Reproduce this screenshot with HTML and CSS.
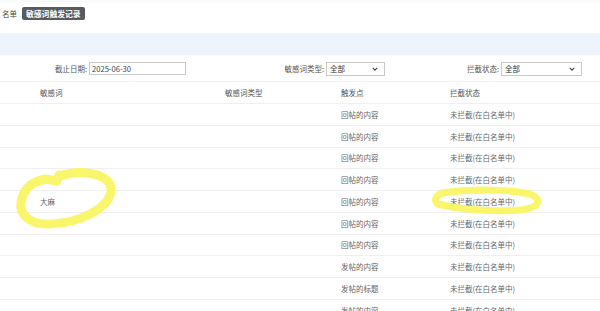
FILE: index.html
```html
<!DOCTYPE html>
<html lang="zh-CN">
<head>
<meta charset="utf-8">
<link rel="stylesheet" href="styles.css">
</head>
<body>
<div class="page">
  <div class="topbar">
    <span class="crumb">名单</span>
    <span class="badge">敏感词触发记录</span>
  </div>
  <div class="band"></div>
  <div class="filters">
    <label class="lbl lbl-date">截止日期:</label>
    <input class="inp" type="text" value="2025-06-30">
    <label class="lbl lbl-type">敏感词类型:</label>
    <div class="sel sel-type"><span>全部</span><svg viewBox="0 0 8 5" class="caret"><path d="M1 1 L4 4 L7 1" fill="none" stroke="#444" stroke-width="1.5"/></svg></div>
    <label class="lbl lbl-status">拦截状态:</label>
    <div class="sel sel-status"><span>全部</span><svg viewBox="0 0 8 5" class="caret"><path d="M1 1 L4 4 L7 1" fill="none" stroke="#444" stroke-width="1.5"/></svg></div>
  </div>
  <div class="table">
    <div class="row head"><div>敏感词</div><div>敏感词类型</div><div>触发点</div><div>拦截状态</div></div>
    <div class="row"><div></div><div></div><div>回帖的内容</div><div>未拦截(在白名单中)</div></div>
    <div class="row"><div></div><div></div><div>回帖的内容</div><div>未拦截(在白名单中)</div></div>
    <div class="row"><div></div><div></div><div>回帖的内容</div><div>未拦截(在白名单中)</div></div>
    <div class="row"><div></div><div></div><div>回帖的内容</div><div>未拦截(在白名单中)</div></div>
    <div class="row"><div>大麻</div><div></div><div>回帖的内容</div><div>未拦截(在白名单中)</div></div>
    <div class="row"><div></div><div></div><div>回帖的内容</div><div>未拦截(在白名单中)</div></div>
    <div class="row"><div></div><div></div><div>回帖的内容</div><div>未拦截(在白名单中)</div></div>
    <div class="row"><div></div><div></div><div>发帖的内容</div><div>未拦截(在白名单中)</div></div>
    <div class="row"><div></div><div></div><div>发帖的标题</div><div>未拦截(在白名单中)</div></div>
    <div class="row"><div></div><div></div><div>发帖的内容</div><div>未拦截(在白名单中)</div></div>
  </div>
  <svg class="marks" viewBox="0 0 600 311" width="600" height="311">
    <path d="M60 176 C84 168 112 175 111 190 C110 208 80 223 50 224 C29 225 19 214 21 202 C23 190 31 182 45 179 L57 181 L59 175" fill="none" stroke="#f8f55c" stroke-opacity="0.9" stroke-width="9" stroke-linecap="round" stroke-linejoin="round"/>
    <path d="M442 193 C470 189 508 189 530 194 C543 199 540 208 520 210 C494 212 462 210 438 204 C433 200 436 196 442 193" fill="none" stroke="#f8f55c" stroke-opacity="0.9" stroke-width="7" stroke-linecap="round" stroke-linejoin="round"/>
  </svg>
</div>
</body>
</html>
```
FILE: styles.css
```css
* { box-sizing: border-box; }
html, body { margin: 0; padding: 0; background: #fff; }
body {
  font-family: "Noto Sans CJK SC", "Microsoft YaHei", sans-serif;
  font-size: 7.5px;
  color: #555;
}
.page { position: relative; width: 600px; height: 311px; overflow: hidden; }
.topbar {
  height: 33px;
  display: flex;
  align-items: flex-start;
  padding: 7px 0 0 2px;
  gap: 5px;
  background: linear-gradient(#f7f9fb 0, #fff 5px);
}
.crumb { line-height: 13px; color: #444; }
.badge {
  height: 13px;
  line-height: 13px;
  padding: 0 4px;
  background: #5a5a5e;
  color: #fff;
  border-radius: 2px;
  font-weight: bold;
  font-size: 7.8px;
}
.band { height: 22px; background: #eef4fb; }
.filters {
  height: 27px;
  display: flex;
  align-items: center;
  padding-top: 1px;
  border-bottom: 1px solid #f3f3f3;
}
.lbl { text-align: right; color: #555; padding-right: 2px; }
.lbl-date { width: 89px; }
.lbl-type { width: 140px; }
.lbl-status { width: 116px; }
.inp {
  width: 97px;
  height: 13px;
  border: 1px solid #c9c9c9;
  padding: 0 2px;
  font: inherit;
  font-size: 7.6px;
  color: #444;
  margin: 0;
}
.sel {
  height: 14px;
  border: 1px solid #c9c9c9;
  display: flex;
  align-items: center;
  justify-content: space-between;
  padding: 0 6px 0 3px;
  color: #333;
  background: #fff;
}
.sel-type { width: 59px; }
.sel-status { width: 81px; }
.caret { width: 6px; height: 4px; }
.table { display: flex; flex-direction: column; }
.row {
  display: grid;
  grid-template-columns: 185px 116px 109px 1fr;
  height: 21.75px;
  align-items: center;
  border-bottom: 1px solid #efefef;
  color: #666;
}
.row > div { padding-left: 40px; white-space: nowrap; }
.row.head { height: 22px; color: #555; }
.marks { position: absolute; left: 0; top: 0; pointer-events: none; }
```
